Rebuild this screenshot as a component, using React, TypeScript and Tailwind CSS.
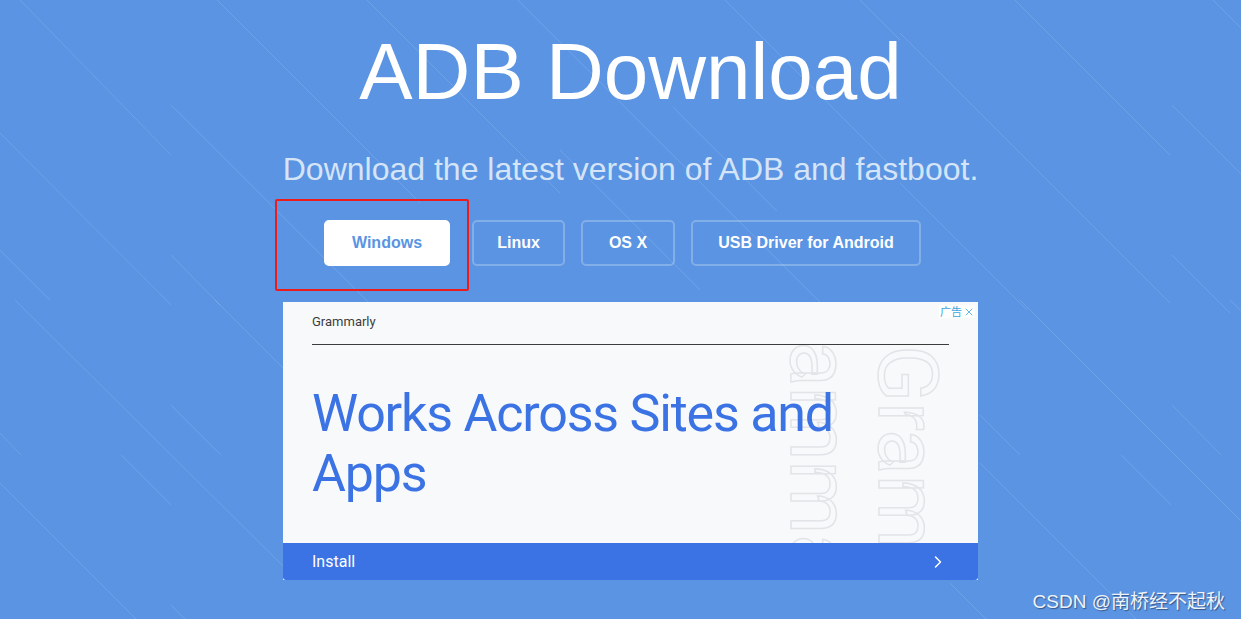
import { ChevronRight, X } from 'lucide-react';

// faint diagonal streaks in the page background
const streaks: [number, number, number, number][] = [
  [20, 0, 171, 155],
  [171, 105, 420, 354],
  [0, 133, 171, 305],
  [0, 250, 50, 300],
  [171, 255, 220, 305],
  [217, 0, 420, 203],
  [367, 0, 420, 53],
  [15, 300, 283, 566],
  [0, 433, 21, 455],
  [121, 455, 171, 505],
  [171, 405, 221, 455],
  [0, 483, 136, 619],
  [171, 605, 185, 619],
  [215, 300, 283, 368],
  [518, 0, 830, 312],
  [673, 107, 777, 211],
  [725, 0, 900, 175],
  [860, 0, 900, 40],
  [420, 53, 560, 193],
  [560, 150, 700, 290],
  [900, 33, 1170, 303],
  [1015, 0, 1170, 155],
  [1213, 0, 1241, 28],
  [1172, 105, 1241, 174],
  [1172, 255, 1230, 313],
  [900, 183, 1027, 310],
  [1020, 300, 1241, 521],
  [1172, 405, 1221, 455],
  [1121, 455, 1171, 505],
  [980, 415, 1020, 455],
  [980, 463, 1136, 619],
  [1230, 300, 1241, 311],
  [950, 583, 986, 619],
];

const buttons = [
  { label: 'Linux', w: 'w-[93px]' },
  { label: 'OS X', w: 'w-[94px]' },
  { label: 'USB Driver for Android', w: 'w-[230px]' },
];

export default function App() {
  return (
    <div className="relative h-[619px] w-full overflow-hidden bg-[#5a94e2] font-['Liberation_Sans',Arial,sans-serif]">
      <svg className="pointer-events-none absolute inset-0" width="1241" height="619">
        {streaks.map(([x1, y1, x2, y2], i) => (
          <line key={i} x1={x1} y1={y1} x2={x2} y2={y2} stroke="rgba(255,255,255,0.13)" strokeWidth="1" />
        ))}
      </svg>

      <div className="relative flex flex-col items-center pl-[20px] pt-[32px]">
        <h1 className="text-[80px] leading-none font-normal text-white">ADB Download</h1>
        <p className="mt-[41px] text-[32px] leading-none text-[#d5e4f7]">
          Download the latest version of ADB and fastboot.
        </p>

        {/* platform buttons */}
        <div className="mt-[35px] -ml-[16px] flex items-center gap-4">
          <div className="relative mr-[6px]">
            <button className="h-[46px] w-[126px] rounded-[5px] border-2 border-white bg-white text-[16px] font-bold text-[#5a94e2]">
              Windows
            </button>
            <div className="pointer-events-none absolute -left-[49px] -top-[21px] h-[92px] w-[194px] rounded-[2px] border-2 border-[#ec1c1c]" />
          </div>
          {buttons.map((b) => (
            <button
              key={b.label}
              className={`h-[46px] ${b.w} rounded-[5px] border-2 border-white/25 text-[16px] font-bold text-white`}
            >
              {b.label}
            </button>
          ))}
        </div>

        {/* ad card */}
        <div className="relative mt-[36px] flex h-[278px] w-[695px] flex-col bg-[#f8f9fb] font-['Roboto',sans-serif]">
          <div className="absolute right-[3px] top-[3px] z-20 flex items-center gap-[1px] bg-white pl-[1px] text-[11px] leading-[13px] text-[#3aa6e0] font-['Noto_Sans_CJK_SC',sans-serif]">
            <span>广告</span>
            <X size={12} strokeWidth={1.6} />
          </div>

          <div className="mx-[29px] border-b-[1.5px] border-[#3c3c3c] pb-[14px] pt-[12px]">
            <div className="text-[13px] leading-[16px] text-[#3c3c3c]">Grammarly</div>
          </div>

          <div className="relative flex-1 overflow-hidden">
            <div className="absolute left-[578px] -top-[88px] origin-top-left rotate-90 whitespace-nowrap text-[84px] leading-none text-transparent [-webkit-text-stroke:1.5px_#e2e4e8]">
              Grammarly
            </div>
            <div className="absolute left-[666px] top-0 origin-top-left rotate-90 whitespace-nowrap text-[84px] leading-none text-transparent [-webkit-text-stroke:1.5px_#e2e4e8]">
              Grammarly
            </div>
            <h2 className="relative z-10 px-[29px] pt-[39px] text-[52px] leading-[60px] font-normal tracking-[-1.2px] text-[#3b73e4]">
              Works Across Sites and
              <br />
              Apps
            </h2>
          </div>

          <div className="flex h-[37px] items-center justify-between rounded-b-[3px] bg-[#3b73e4] pl-[29px] pr-[30px] text-[16px] text-white">
            <span>Install</span>
            <ChevronRight size={20} strokeWidth={1.8} />
          </div>
        </div>
      </div>

      <div className="absolute bottom-[8px] right-[16px] text-[19px] leading-none text-[#eef3fa] [text-shadow:1px_1px_1px_rgba(40,60,100,0.7)] font-['Liberation_Sans','Noto_Sans_CJK_SC',sans-serif]">
        CSDN @南桥经不起秋
      </div>
    </div>
  );
}
